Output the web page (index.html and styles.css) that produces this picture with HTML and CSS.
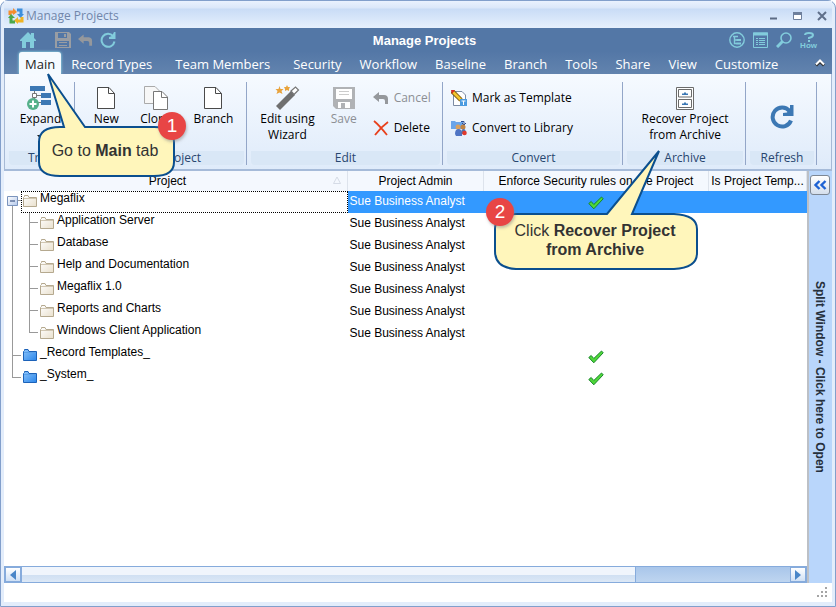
FILE: index.html
```html
<!DOCTYPE html>
<html lang="en">
<head>
    <meta charset="UTF-8">
    <meta name="viewport" content="width=device-width, initial-scale=1.0">
    <title>Manage Projects</title>
    <link rel="stylesheet" href="styles.css">
</head>
<body>
    <!-- shared icons -->
    <svg class="defs" aria-hidden="true">
        <linearGradient id="cream" x1="0" y1="0" x2="1" y2="1"><stop offset="0" stop-color="#fff"/><stop offset="1" stop-color="#e9e0cd"/></linearGradient>
        <linearGradient id="blue" x1="0" y1="0" x2="1" y2="1"><stop offset="0" stop-color="#8cc4fb"/><stop offset="1" stop-color="#2a86ea"/></linearGradient>
        <linearGradient id="box" x1="0" y1="0" x2="1" y2="1"><stop offset="0" stop-color="#fff"/><stop offset="1" stop-color="#b4c8ea"/></linearGradient>
        <symbol id="folder" viewBox="0 0 14 12"><path d="M.5 11.500V2.500L1.500 1.500V.5H5L6 2.500H13.500V11.500Z" fill="url(#cream)" stroke="#b5a98f"/><path d="M1 3.500H13" stroke="#d0c6b2"/></symbol>
        <symbol id="folder-blue" viewBox="0 0 14 12"><path d="M.5 11.500V2.500L1.500 1.500V.5H5L6 2.500H13.500V11.500Z" fill="url(#blue)" stroke="#1c62b8"/><path d="M1 3.500H13" stroke="#5aa0e8"/></symbol>
        <symbol id="check" viewBox="0 0 16 14"><path d="M.8 7.500L3.200 5.500L5.800 8.500L13.500 1L15.200 2.800L5.800 12.800Z" fill="#4fd838" stroke="#17842a"/></symbol>
        <symbol id="page" viewBox="0 0 20 24"><path d="M1.500 1.500H13L18.500 7.500V22.500H1.500Z" fill="#fff" stroke="#4a4a4a"/><path d="M12.500 1.500V7.500H18.500" fill="none" stroke="#4a4a4a"/></symbol>
        <symbol id="undo" viewBox="0 0 16 12"><path d="M0 5L6 0V3H11Q15 3 15 7V12H12V9Q12 7 10 7H6V10Z" fill="#95989c"/></symbol>
        <symbol id="reload" viewBox="0 0 24 24"><path d="M19.500 6A9.500 9.500 0 1 0 21 15.500" fill="none" stroke="currentColor" stroke-width="4"/><path d="M23.500 0V11H13V8L17 7.500L20 3V0Z" fill="currentColor"/></symbol>
        <symbol id="disk" viewBox="0 0 22 22"><path d="M0 0H22V22H3L0 19Z" fill="#b0b2b5"/><path d="M3 2H19V12H3ZM5 15H17V21H5Z" fill="#fff"/><path d="M6 4.500H16M6 7.500H16" stroke="#ccc"/><path d="M8 16H12V21H8Z" fill="#b0b2b5"/></symbol>
    </svg>

    <div class="window">
        <div class="titlebar">
            <svg width="16" height="16" viewBox="0 0 16 16" fill="none" stroke-width="3"><path d="M2 7V4H7" stroke="#f58d2c"/><path d="M5 0L9 4L5 7Z" fill="#f58d2c"/><path d="M9 2H13V7" stroke="#3d8fdc"/><path d="M16 6L12.500 10L9 6Z" fill="#3d8fdc"/><path d="M14 9V13H9" stroke="#f0b423"/><path d="M10 9V16L6 12.500Z" fill="#f0b423"/><path d="M7 14H3V9" stroke="#4ca84c"/><path d="M0 10L3 6L7 10Z" fill="#4ca84c"/></svg>
            <span class="caption">Manage Projects</span>
            <button aria-label="Minimize"><svg width="10" height="10"><path d="M1 7.500H8" stroke="#5c6b84" stroke-width="2"/></svg></button>
            <button aria-label="Maximize"><svg width="10" height="10"><path d="M.5 2.500H8.500V8.500H.5Z" fill="#fff" stroke="#6e7f9c"/><path d="M0 2.500H9" stroke="#6e7f9c" stroke-width="3"/></svg></button>
            <button aria-label="Close"><svg width="10" height="10"><path d="M1 1L9 9M9 1L1 9" stroke="#5f6f8a" stroke-width="2"/></svg></button>
        </div>

        <header class="header">
            <div class="toolbar">
                <div class="tools">
                    <button class="home" aria-label="Home"><svg width="16" height="16"><path d="M8 0L11 3V1H14V6L16 8V9H14V16H10V10H6V16H2V9H0V8Z" fill="#82ccdc"/></svg></button>
                    <button aria-label="Save"><svg width="16" height="16"><path d="M0 0H14L16 2V16H0Z" fill="#999da3"/><path d="M3 1H12V6H3ZM2 9H14V15H2Z" fill="#5377a6"/><path d="M9 2H11V5H9ZM4 10H12V11H4ZM4 13H12V14H4Z" fill="#999da3"/></svg></button>
                    <button aria-label="Undo"><svg width="15" height="12"><use href="#undo"/></svg></button>
                    <button class="cyan" aria-label="Refresh"><svg width="16" height="16"><path d="M13 4A6.500 6.500 0 1 0 14.500 9.500" fill="none" stroke="currentColor" stroke-width="2"/><path d="M15.500 0V7H9V5L12 4L14 0Z" fill="currentColor"/></svg></button>
                </div>
                <h1>Manage Projects</h1>
                <div class="tools tools-right">
                    <button aria-label="Tree"><svg width="16" height="16" fill="none" stroke="#82ccdc"><circle cx="8" cy="8" r="7.200" stroke-width="1.400"/><path d="M4 4.500H9M5.500 4V11.500H8M5.500 8H8" stroke-width="1.400"/><path d="M7.500 8H12M7.500 11.500H12" stroke-width="2"/></svg></button>
                    <button aria-label="List"><svg width="15" height="16" fill="none" stroke="#82ccdc"><path d="M.5 1H14.500V15.500H.5Z"/><path d="M0 2H15" stroke-width="3"/><path d="M3 6.500H5M6 6.500H12M3 8.500H5M6 8.500H12M3 10.500H5M6 10.500H12M3 12.500H5M6 12.500H12"/></svg></button>
                    <button aria-label="Search"><svg width="16" height="16" fill="none" stroke="#82ccdc"><circle cx="10" cy="6" r="5" stroke-width="1.600"/><path d="M6.500 9.500L1 15" stroke-width="3"/></svg></button>
                    <button class="how" aria-label="How"><svg width="12" height="10" fill="none" stroke="#82ccdc" stroke-width="2"><path d="M2 3Q2 1 6 1Q10 1 10 3Q10 5 6 6V7"/><path d="M5 9H7"/></svg><span>How</span></button>
                </div>
            </div>
            <nav class="tabs">
                <a href="#" class="active">Main</a>
                <a href="#" class="wide">Record Types</a>
                <a href="#" class="wide">Team Members</a>
                <a href="#">Security</a>
                <a href="#">Workflow</a>
                <a href="#">Baseline</a>
                <a href="#">Branch</a>
                <a href="#">Tools</a>
                <a href="#">Share</a>
                <a href="#">View</a>
                <a href="#">Customize</a>
                <button class="collapse" aria-label="Collapse ribbon"><svg width="10" height="8" fill="none"><path d="M1 6.500L5 2.500L9 6.500" stroke="#333" stroke-width="3"/><path d="M1 5.500L5 1.500L9 5.500" stroke="#fff" stroke-width="2"/></svg></button>
            </nav>
        </header>

        <div class="ribbon">
            <section class="group">
                <div class="items">
                    <button class="big">
                        <svg width="26" height="26"><path d="M3 1H18V6H3ZM14 8H24V13H14ZM14 15H24V20H14Z" fill="#3c78b4"/><path d="M7.500 6V17M8 10.500H14M8 17.500H14" stroke="#777" fill="none"/><path d="M5.500 8.500H9.500V12.500H5.500Z" fill="#fff" stroke="#777"/><circle cx="6" cy="19" r="6" fill="#55b08a"/><path d="M6 15.500V22.500M2.500 19H9.500" stroke="#fff" stroke-width="2"/></svg>
                        <span>Expand</span>
                        <svg width="7" height="5"><path d="M0 0H7L3.500 4Z" fill="#222"/></svg>
                    </button>
                </div>
                <h2>Tree</h2>
            </section>
            <section class="group">
                <div class="items spread">
                    <button class="big"><svg width="20" height="26" viewBox="0 -1 20 26"><use href="#page" width="20" height="24"/></svg><span>New</span></button>
                    <button class="big"><svg width="26" height="26" fill="#f7f7f7" stroke="#aaa"><path d="M1.500 1.500H12L16.500 6V18.500H1.500Z"/><path d="M10.500 6.500H19L24.500 12V24.500H10.500Z" fill="#fff" stroke="#777"/><path d="M18.500 7V12.500H24" fill="none" stroke="#777"/></svg><span>Clone</span></button>
                    <button class="big"><svg width="20" height="26" viewBox="0 -1 20 26"><use href="#page" width="20" height="24"/></svg><span>Branch</span></button>
                </div>
                <h2>Create Project</h2>
            </section>
            <section class="group">
                <div class="items edit">
                    <button class="big"><svg width="26" height="26"><path d="M2 21L17 6L21 10L6 25Z" fill="#6f6f6f"/><path d="M17 6L21.500 2L24.500 5L20 9.500Z" fill="#fff" stroke="#777" stroke-width="1.200"/><path d="M5.500 1L6.500 4H9.500L7.500 6L8.500 9L5.500 7.500L2.500 9L3.500 6L1.500 4H4.500ZM13 0L14 2H16L15 4V6L13 5L11 6V4L10 2H12Z" fill="#e8a33d"/></svg><span>Edit using<br>Wizard</span></button>
                    <button class="big" disabled><svg width="22" height="26" viewBox="0 -2 22 26"><use href="#disk" width="22" height="22"/></svg><span>Save</span></button>
                    <div class="stack">
                        <button class="small" disabled><svg width="16" height="12"><use href="#undo"/></svg><span>Cancel</span></button>
                        <button class="small"><svg width="16" height="16"><path d="M1 1Q6 5 14 15M15 2Q8 7 2 15" fill="none" stroke="#e8401c" stroke-width="1.800"/></svg><span>Delete</span></button>
                    </div>
                </div>
                <h2>Edit</h2>
            </section>
            <section class="group">
                <div class="items convert">
                    <div class="stack">
                        <button class="small"><svg width="16" height="16"><path d="M2.500 1.500H11L14.500 5V15.500H2.500Z" fill="#fff" stroke="#7c8ba3"/><path d="M1 1L10 10" stroke="#7a5a14" stroke-width="4.500"/><path d="M2 2L10 10" stroke="#f5c52d" stroke-width="2.500"/><path d="M0 0H4L1 4Z" fill="#d92b22"/><path d="M9 9H16V16H9Z" fill="#4b9be0"/><path d="M10.500 11H14.500M12.500 11V15" stroke="#fff"/></svg><span>Mark as Template</span></button>
                        <button class="small"><svg width="16" height="16"><path d="M0 1H4L5 2H12V9H0Z" fill="#6aa5ea"/><path d="M10 1.500H13V4M11 3L13 5L15 3" fill="none" stroke="#2d4c91"/><circle cx="7" cy="7" r="2.500" fill="#d9a160"/><circle cx="12" cy="7" r="2.500" fill="#c08343"/><path d="M4 14Q4 9 7.500 9Q11 9 11 14V16H5Z" fill="#4f74c4"/><path d="M10 14Q10 9 12.500 9Q15 9 15 14Z" fill="#5470ab"/><circle cx="13.500" cy="13" r="2.300" fill="#e03a2e"/></svg><span>Convert to Library</span></button>
                    </div>
                </div>
                <h2>Convert</h2>
            </section>
            <section class="group">
                <div class="items">
                    <button class="big"><svg width="18" height="26" fill="#fff" stroke="#6b6b6b"><path d="M.5 2.500H17.500V24.500H.5Z"/><path d="M2.500 4.500H15.500V12H2.500ZM2.500 14.500H15.500V22.500H2.500Z"/><path d="M6 10V8.500H8V7.500H10V8.500H12V10ZM6 20V18.500H8V17.500H10V18.500H12V20Z" fill="#3c78b4" stroke="none"/></svg><span>Recover Project<br>from Archive</span></button>
                </div>
                <h2>Archive</h2>
            </section>
            <section class="group">
                <div class="items">
                    <button class="refresh" aria-label="Refresh"><svg width="24" height="24"><use href="#reload"/></svg></button>
                </div>
                <h2>Refresh</h2>
            </section>
        </div>

        <div class="content">
            <div class="pane">
                <table class="projects">
                    <colgroup><col><col class="col-admin"><col class="col-enforce"><col class="col-template"></colgroup>
                    <thead>
                        <tr><th><span>Project</span><svg class="sort" width="8" height="8"><path d="M.5 7.500L4 1L7.500 7.500Z" fill="none" stroke="#d5dbe6"/></svg></th><th>Project Admin</th><th>Enforce Security rules on the Project</th><th>Is Project Temp...</th></tr>
                    </thead>
                    <tbody>
                        <tr class="selected">
                            <td><div class="node root"><svg width="17" height="22"><path d="M8.500 14V22M14 9.500H17" stroke="#999"/><path d="M3.500 5.500H13.500V14.500H3.500Z" fill="url(#box)" stroke="#7b94bd"/><path d="M6 10H11" stroke="#223c73"/></svg><div class="focus"><svg width="14" height="12"><use href="#folder"/></svg><span>Megaflix</span></div></div></td>
                            <td>Sue Business Analyst</td><td class="mark"><svg width="16" height="14"><use href="#check"/></svg></td><td></td>
                        </tr>
                        <tr><td><div class="node child"><svg width="35" height="22"><path d="M8.500 0V22M25.500 0V22M25 9.500H34" stroke="#999"/></svg><svg width="14" height="12"><use href="#folder"/></svg><span>Application Server</span></div></td><td>Sue Business Analyst</td><td></td><td></td></tr>
                        <tr><td><div class="node child"><svg width="35" height="22"><path d="M8.500 0V22M25.500 0V22M25 9.500H34" stroke="#999"/></svg><svg width="14" height="12"><use href="#folder"/></svg><span>Database</span></div></td><td>Sue Business Analyst</td><td></td><td></td></tr>
                        <tr><td><div class="node child"><svg width="35" height="22"><path d="M8.500 0V22M25.500 0V22M25 9.500H34" stroke="#999"/></svg><svg width="14" height="12"><use href="#folder"/></svg><span>Help and Documentation</span></div></td><td>Sue Business Analyst</td><td></td><td></td></tr>
                        <tr><td><div class="node child"><svg width="35" height="22"><path d="M8.500 0V22M25.500 0V22M25 9.500H34" stroke="#999"/></svg><svg width="14" height="12"><use href="#folder"/></svg><span>Megaflix 1.0</span></div></td><td>Sue Business Analyst</td><td></td><td></td></tr>
                        <tr><td><div class="node child"><svg width="35" height="22"><path d="M8.500 0V22M25.500 0V22M25 9.500H34" stroke="#999"/></svg><svg width="14" height="12"><use href="#folder"/></svg><span>Reports and Charts</span></div></td><td>Sue Business Analyst</td><td></td><td></td></tr>
                        <tr><td><div class="node child"><svg width="35" height="22"><path d="M8.500 0V22M25.500 0V10M25 9.500H34" stroke="#999"/></svg><svg width="14" height="12"><use href="#folder"/></svg><span>Windows Client Application</span></div></td><td>Sue Business Analyst</td><td></td><td></td></tr>
                        <tr><td><div class="node"><svg width="18" height="22"><path d="M8.500 0V22M8 10.500H17" stroke="#999"/></svg><svg width="14" height="12"><use href="#folder-blue"/></svg><span>_Record Templates_</span></div></td><td></td><td class="mark"><svg width="16" height="14"><use href="#check"/></svg></td><td></td></tr>
                        <tr><td><div class="node"><svg width="18" height="22"><path d="M8.500 0V11M8 10.500H17" stroke="#999"/></svg><svg width="14" height="12"><use href="#folder-blue"/></svg><span>_System_</span></div></td><td></td><td class="mark"><svg width="16" height="14"><use href="#check"/></svg></td><td></td></tr>
                    </tbody>
                </table>
                <div class="scrollbar">
                    <button aria-label="Scroll left"><svg width="6" height="10"><path d="M6 0V10L0 5Z" fill="#4a86c8"/></svg></button>
                    <div class="track"><div class="thumb"></div></div>
                    <button aria-label="Scroll right"><svg width="6" height="10"><path d="M0 0V10L6 5Z" fill="#4a86c8"/></svg></button>
                </div>
            </div>
            <aside class="split">
                <button aria-label="Open split window"><svg width="14" height="12" fill="none" stroke="#1d62d4" stroke-width="2.400"><path d="M6.500 2L2.500 6L6.500 10M12.500 2L8.500 6L12.500 10"/></svg></button>
                <span>Split Window - Click here to Open</span>
            </aside>
        </div>

        <footer class="status"><svg width="12" height="12" fill="#a5a5a5"><path d="M8 0H10V2H8ZM4 4H6V6H4ZM8 4H10V6H8ZM0 8H2V10H0ZM4 8H6V10H4ZM8 8H10V10H8Z"/></svg></footer>

        <!-- help callouts -->
        <div class="callout callout-main">
            <svg width="140" height="108"><path d="M11 2L27 55H23Q2 55 2 70V90Q2 104 23 104H117Q137 104 137 90V70Q137 55 117 55H48Z"/></svg>
            <p>Go to <b>Main</b> tab</p>
            <span class="badge">1</span>
        </div>
        <div class="callout callout-archive">
            <svg width="206" height="122"><path d="M167 2L115 65H24Q3 66 3 80V102Q3 119 24 120H182Q205 119 205 104V80Q205 66 182 65H140Z"/></svg>
            <p>Click <b>Recover Project<br>from Archive</b></p>
            <span class="badge">2</span>
        </div>
    </div>
</body>
</html>
```
FILE: styles.css
```css
* {
    box-sizing: border-box;
}
body {
    margin: 0;
    font-family: "Liberation Sans", Arial, sans-serif;
    font-size: 12px;
    color: #000;
}
button {
    padding: 0;
    border: none;
    background: none;
    font: inherit;
    color: inherit;
    cursor: pointer;
}
svg {
    display: block;
    flex: none;
}
.defs {
    position: absolute;
    width: 0;
    height: 0;
}
.window {
    position: relative;
    display: flex;
    flex-direction: column;
    min-height: 100vh;
    padding: 0 3px 4px;
    border: 1px solid #829fcb;
    border-radius: 8px 8px 0 0;
    background: #e3edfb;
}

/* title bar */
.titlebar {
    display: flex;
    align-items: center;
    gap: 14px;
    height: 27px;
    padding: 2px 5px 0 4px;
    background: linear-gradient(#eaf2fe 0, #dbe7f9 7px, #c9dcf6 8px, #e6f0fd);
    font-family: "Open Sans", sans-serif;
    color: #7186aa;
}
.caption {
    flex: 1;
    margin-left: -12px;
}

/* header */
.header {
    background: linear-gradient(#5377a6 50%, #6283ae);
    color: #fff;
}
.toolbar {
    display: grid;
    grid-template-columns: 1fr auto 1fr;
    align-items: center;
    height: 24px;
    padding: 0 15px 0 16px;
}
.toolbar h1 {
    margin: 0;
    padding-left: 12px;
    font-size: 13px;
}
.tools {
    display: flex;
    align-items: center;
    gap: 7px;
    height: 20px;
}
.home {
    margin-right: 12px;
}
.cyan {
    color: #82ccdc;
}
.tools-right {
    justify-content: flex-end;
    gap: 8px;
}
.how {
    display: flex;
    flex-direction: column;
    align-items: center;
    font-size: 8px;
    font-weight: bold;
    line-height: 7px;
    color: #82ccdc;
}
.tabs {
    display: flex;
    height: 22px;
    padding: 0 7px 0 15px;
    font-family: "Open Sans", sans-serif;
    font-size: 13px;
    line-height: 25px;
}
.tabs a {
    padding: 0 9px;
    color: #fff;
    text-decoration: none;
}
.tabs .active {
    padding: 0 6px;
    margin-right: 1px;
    border-radius: 3px 3px 0 0;
    background: #f5faff;
    box-shadow: 0 0 3px #9ef0f5;
    color: #222;
}
.tabs .wide {
    padding-right: 14px;
}
.collapse {
    margin-left: auto;
}

/* ribbon */
.ribbon {
    display: grid;
    grid-template-columns: 70fr 172fr 196fr 180fr 123fr 71fr 14fr;
    height: 97px;
    padding-top: 8px;
    border-left: 1px solid #a6b9d5;
    border-right: 1px solid #a6b9d5;
    border-bottom: 2px solid #a6bbd9;
    background: linear-gradient(#f6faff, #dfebfa);
    font-family: "Open Sans", sans-serif;
}
.group {
    display: flex;
    flex-direction: column;
    height: 83px;
    padding: 0 2px 0 4px;
    border-right: 1px solid #93a6c8;
}
.group h2 {
    margin: 0;
    border-radius: 0 0 4px 4px;
    background: #d9e7f6;
    font-size: 12px;
    font-weight: normal;
    line-height: 14px;
    text-align: center;
    color: #28466f;
}
.items {
    display: flex;
    flex: 1;
    justify-content: center;
}
.spread {
    justify-content: space-around;
    padding-left: 4px;
}
.edit {
    gap: 16px;
}
.convert {
    justify-content: flex-start;
    padding-left: 4px;
}
.big {
    display: flex;
    flex-direction: column;
    align-items: center;
    padding-top: 3px;
    line-height: 16px;
}
.big svg + span {
    white-space: nowrap;
}
.big span + svg {
    margin-top: 8px;
}
button:disabled {
    color: #8c8f94;
}
.stack {
    display: flex;
    flex-direction: column;
    gap: 14px;
    padding-top: 8px;
}
.small {
    display: flex;
    align-items: center;
    gap: 5px;
    line-height: 16px;
    white-space: nowrap;
}
.refresh {
    color: #3c78b4;
}

/* project grid */
.content {
    display: flex;
    flex: 1;
}
.pane {
    display: flex;
    flex: 1;
    flex-direction: column;
    min-width: 0;
    background: #fff;
}
.projects {
    width: 100%;
    table-layout: fixed;
    border-collapse: collapse;
}
.col-admin { width: 136px; }
.col-enforce { width: 225px; }
.col-template { width: 98px; }
.projects th {
    height: 20px;
    padding: 0;
    border-right: 1px solid #dde3ec;
    background: #f4f8fe;
    font-weight: normal;
    white-space: nowrap;
}
.projects th:first-child {
    padding: 0 16px 0 0;
}
.sort {
    float: right;
    margin: 2px -10px 0 0;
}
.projects td {
    height: 22px;
    padding: 0 2px 2px;
    white-space: nowrap;
}
.projects td:first-child {
    padding: 0;
    vertical-align: top;
}
.selected td {
    background: #3399ff;
    color: #fff;
}
.selected td:first-child {
    background: #fff;
    color: #000;
}
.projects .mark {
    padding: 2px 2px 0;
}
.mark svg {
    margin: auto;
}
.node {
    display: flex;
    gap: 1px;
    line-height: 15px;
}
.node svg + svg {
    margin-top: 4px;
}
.node span {
    padding-left: 2px;
}
.root {
    gap: 0;
}
.focus {
    display: flex;
    flex: 1;
    gap: 1px;
    height: 22px;
    border: 1px dotted #000;
    line-height: 13px;
}
.focus svg {
    margin: 3px 0 0 1px;
}

/* scrollbar */
.scrollbar {
    display: flex;
    height: 17px;
    margin-top: auto;
    border: 1px solid #86abdc;
    background: linear-gradient(#a9c6ea, #bed5f0);
}
.scrollbar button {
    display: grid;
    place-items: center;
    width: 16px;
    border: 1px solid #86abdc;
    background: linear-gradient(#fff, #cfe0f5);
}
.track {
    flex: 1;
}
.thumb {
    width: 80%;
    height: 15px;
    border: 1px solid #86abdc;
    border-top: 0;
    border-bottom: 0;
    background: linear-gradient(#f0f5fc 50%, #cfdff2 51%, #dce8f6);
}

/* split bar */
.split {
    display: flex;
    flex-direction: column;
    align-items: center;
    width: 25px;
    padding: 4px 2px 0 0;
    border-left: 2px solid #bcc0c6;
    background: #b9d6fb;
}
.split button {
    display: grid;
    place-items: center;
    width: 20px;
    height: 20px;
    border: 1px solid #7d8794;
    border-radius: 3px;
    background: linear-gradient(#fff, #d5dfec);
}
.split span {
    margin-top: 86px;
    font-weight: bold;
    color: #26303c;
    writing-mode: vertical-rl;
}
.status {
    display: flex;
    align-items: flex-end;
    justify-content: flex-end;
    height: 19px;
    padding: 3px;
    background: #fff;
}

/* callouts float over the window */
.callout {
    position: absolute;
    font-size: 16px;
    text-align: center;
    color: #333;
}
.callout path {
    fill: #fff6bb;
    stroke: #0b4f8e;
    stroke-width: 2px;
}
.callout p {
    position: absolute;
    right: 0;
    bottom: 0;
    left: 0;
    margin: 0;
    line-height: 19px;
    white-space: nowrap;
}
.callout-main {
    top: 71px;
    left: 36px;
}
.callout-main p {
    bottom: 20px;
    right: 4px;
}
.callout-archive {
    top: 148px;
    left: 491px;
}
.callout-archive p {
    bottom: 12px;
}
.badge {
    position: absolute;
    width: 28px;
    height: 28px;
    border-radius: 50%;
    background: #e84545;
    box-shadow: 1px 2px 3px #8888;
    font-size: 19px;
    line-height: 28px;
    color: #fff;
}
.callout-main .badge {
    top: 40px;
    right: -9px;
}
.callout-archive .badge {
    top: 49px;
    left: -6px;
}
```
